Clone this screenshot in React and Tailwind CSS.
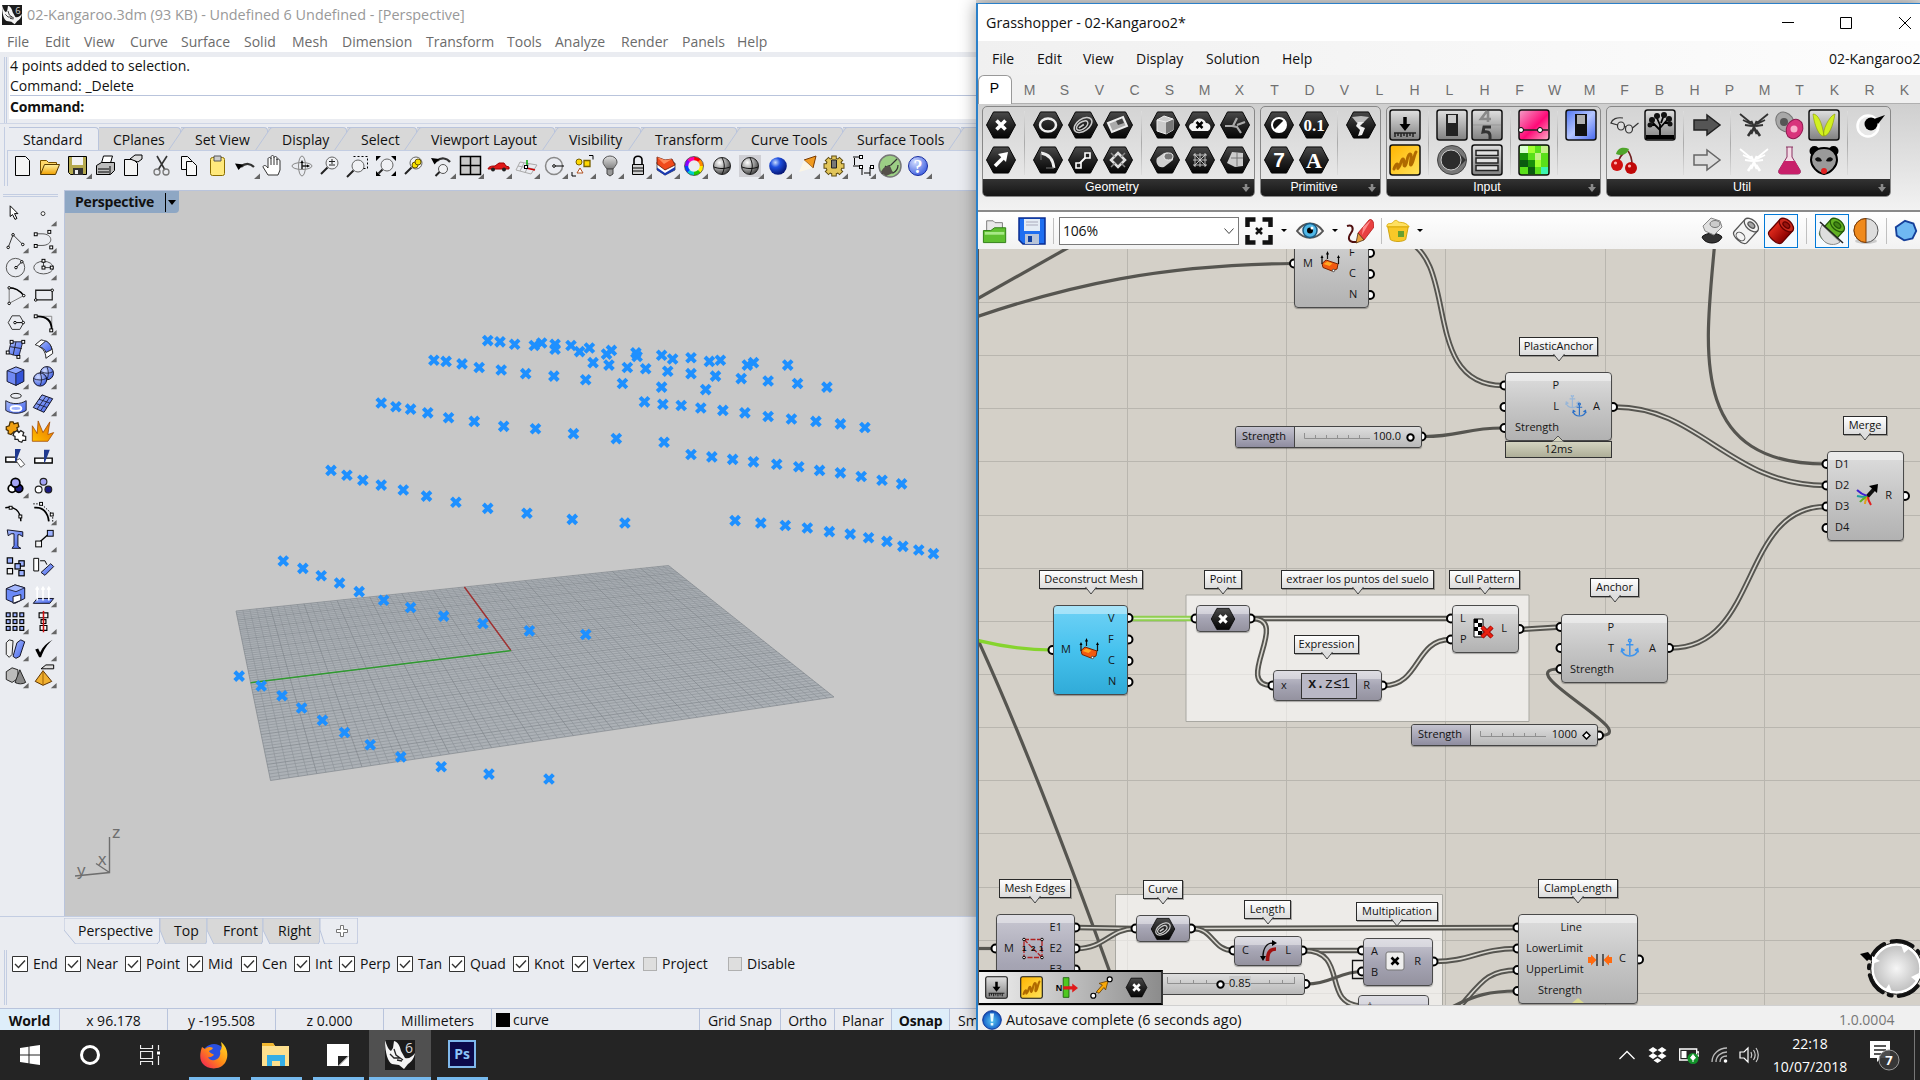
import React from "react";

/* ---------- shared gradients ---------- */
function Defs() {
  return (
    <svg className="absolute h-0 w-0" aria-hidden="true">
      <defs>
        <linearGradient id="hex" x1="0" y1="0" x2="0" y2="1">
          <stop offset="0" stopColor="#4a4a4a" />
          <stop offset=".5" stopColor="#232323" />
          <stop offset="1" stopColor="#050505" />
        </linearGradient>
        <linearGradient id="metal" x1="0" y1="0" x2="0" y2="1">
          <stop offset="0" stopColor="#e0e0e0" />
          <stop offset="1" stopColor="#808080" />
        </linearGradient>
        <linearGradient id="blueBtn" x1="0" y1="0" x2="1" y2="1">
          <stop offset="0" stopColor="#4f74f0" />
          <stop offset=".5" stopColor="#b5c6ff" />
          <stop offset="1" stopColor="#4466ee" />
        </linearGradient>
        <linearGradient id="pink" x1="0" y1="0" x2="1" y2="1">
          <stop offset="0" stopColor="#f3a0c8" />
          <stop offset=".55" stopColor="#ff0a78" />
          <stop offset="1" stopColor="#ffb0c8" />
        </linearGradient>
        <linearGradient id="yel" x1="0" y1="0" x2="1" y2="1">
          <stop offset="0" stopColor="#ffb400" />
          <stop offset="1" stopColor="#ffe35a" />
        </linearGradient>
        <linearGradient id="fold" x1="0" y1="0" x2="0" y2="1">
          <stop offset="0" stopColor="#fff0a0" />
          <stop offset="1" stopColor="#f0a000" />
        </linearGradient>
        <linearGradient id="face" x1="0" y1="0" x2="1" y2="1">
          <stop offset="0" stopColor="#a9bdff" />
          <stop offset="1" stopColor="#3f5fe8" />
        </linearGradient>
        <linearGradient id="burst" x1="0" y1="1" x2="1" y2="0">
          <stop offset="0" stopColor="#ffc000" />
          <stop offset="1" stopColor="#e66a00" />
        </linearGradient>
        <radialGradient id="ballGray" cx=".35" cy=".3" r=".8">
          <stop offset="0" stopColor="#ffffff" />
          <stop offset=".5" stopColor="#9a9a9a" />
          <stop offset="1" stopColor="#303030" />
        </radialGradient>
        <radialGradient id="ballBlue" cx=".35" cy=".3" r=".8">
          <stop offset="0" stopColor="#c8dcff" />
          <stop offset=".35" stopColor="#1f50e0" />
          <stop offset="1" stopColor="#000a60" />
        </radialGradient>
        <radialGradient id="ballInfo" cx=".5" cy=".55" r=".6">
          <stop offset="0" stopColor="#5ac8f0" />
          <stop offset=".7" stopColor="#1f6fd0" />
          <stop offset="1" stopColor="#0a2c90" />
        </radialGradient>
        <radialGradient id="ballSoft" cx=".35" cy=".3" r=".8">
          <stop offset="0" stopColor="#d0dbff" />
          <stop offset="1" stopColor="#3355dd" />
        </radialGradient>
        <radialGradient id="knob" cx=".5" cy=".5" r=".6">
          <stop offset="0" stopColor="#f6f6f6" />
          <stop offset="1" stopColor="#b4b4b4" />
        </radialGradient>
        <linearGradient id="redCyl" x1="0" y1="0" x2="1" y2="0">
          <stop offset="0" stopColor="#e02a1c" />
          <stop offset="1" stopColor="#8a0000" />
        </linearGradient>
        <linearGradient id="fox" x1="1" y1="0" x2="0" y2="1">
          <stop offset="0" stopColor="#ffe226" />
          <stop offset=".5" stopColor="#ff8a16" />
          <stop offset="1" stopColor="#f0135f" />
        </linearGradient>
      </defs>
    </svg>
  );
}

const Sq = ({ x, y, s = 3 }) => (
  <rect x={x - s / 2} y={y - s / 2} width={s} height={s} fill="#fff" stroke="#000" strokeWidth="1" />
);
const Dot = ({ x, y }) => <circle cx={x} cy={y} r="1.3" fill="#fff" stroke="#000" strokeWidth="1" />;

function Rhino({ className, six }) {
  return (
    <svg className={className} viewBox="0 0 30 30">
      <rect width="30" height="30" fill="#1b1b1b" />
      <path d="M0 0c2 6 3 9 6 11l2-3 1-7c4 1 6 5 7 10l4 7c4 1 7-1 10-5-1 6-4 9-7 11l-4 5-5-4-7-1C3 22 0 13 0 0z" fill="#f4f4f4" />
      <path d="M5 14l4 4 6 0M9 9l2 6 7 5M12 20l5 1" stroke="#222" fill="none" strokeWidth="1.3" />
      {six && (
        <text x="20" y="13" fontSize="14" fill="#d8d8d8" fontFamily="Open Sans">
          6
        </text>
      )}
    </svg>
  );
}

/* ---------- Rhino main toolbar ---------- */
const lens = (x = 16, y = 11) => (
  <>
    <circle cx={x} cy={y} r="6" fill="#f0f1f4" stroke="#666" />
    <path d={`M${x - 4.5} ${y + 4.5}L${x - 11} ${y + 11}`} stroke="#222" strokeWidth="2" />
  </>
);
const BAR = [
  [<path d="M7.500 4.500h10l4 4v15h-14z" fill="#f4f4f4" stroke="#000" />, 0],
  [<><path d="M4.500 22V8.500h6l2 2h8V14" fill="#ffd76a" stroke="#7a5200" /><path d="M4.500 22.500l4-10h15l-4 10z" fill="url(#fold)" stroke="#5a3c00" /></>, 0],
  [<><path d="M4.500 4.500h18v18h-16l-2-2z" fill="#b5a94e" stroke="#000" /><path d="M8 5h11v8H8z" fill="#f2f2f2" /><path d="M9 16h10v7H9z" fill="#333" /><path d="M11 18h3v4h-3z" fill="#eee" /></>, 1],
  [<><path d="M9.500 11l2-7h9l-2 7" fill="#fff" stroke="#000" /><path d="M4.500 13.500l5-3h13v8l-4 4h-14z" fill="#bdbdbd" stroke="#000" /><path d="M6 17h11M6 20h11M18 14v8" stroke="#000" /></>, 0],
  [<><path d="M4.500 7.500h9l4 4v12h-13z" fill="#f4f4f4" stroke="#000" /><path d="M10 7l5-4h7v4l-4 3z" fill="#ddd" stroke="#000" /></>, 0],
  [<><path d="M9 4l8 14M19 4L10 18" stroke="#333" strokeWidth="1.600" /><circle cx="9" cy="20" r="3" fill="none" stroke="#777" strokeWidth="1.300" /><circle cx="18" cy="20" r="3" fill="none" stroke="#777" strokeWidth="1.300" /></>, 0],
  [<><path d="M5.500 4.500h6l4 4v9h-10z" fill="#f7f7f7" stroke="#000" /><path d="M10.500 9.500h6l4 4v10h-10z" fill="#f7f7f7" stroke="#000" /></>, 0],
  [<><rect x="6.500" y="5.500" width="14" height="18" rx="2" fill="#ffe97c" stroke="#8a6d00" /><path d="M10 4h7v5h-7z" fill="#ccc" stroke="#555" /></>, 0],
  [<><path d="M9 15c5-5 10-3 13 0" stroke="#333" strokeWidth="2.200" fill="none" /><path d="M3 11.500l8.500 1-5 5.500z" fill="#000" /></>, 1],
  [<path d="M8 23l-5-8c0-2 3-2 4 0l1 1V7c0-2 3-2 3 0v-2c0-2 3-2 3 0v1c0-2 3-2 3 0v2c0-2 3-1 3 1v9l-2 5z M11 7v6M14 6v7M17 7v6" fill="#fff" stroke="#333" />, 0],
  [<><ellipse cx="14" cy="14" rx="10" ry="3.500" fill="none" stroke="#888" /><ellipse cx="14" cy="14" rx="3.500" ry="10" fill="none" stroke="#888" /><path d="M14 11v6M14 14h6" stroke="#222" strokeWidth="1.500" /><path d="M12.500 11l1.500-3 1.500 3zM19 12.500l3 1.500-3 1.500z" /></>, 0],
  [<>{lens()}<path d="M13 9.500h6M16 7v5M13 13h6" stroke="#222" /></>, 0],
  [<>{lens(14, 14)}<path d="M9.500 4.500h14v12h-5" stroke="#000" strokeDasharray="2 2" fill="none" /></>, 0],
  [<><circle cx="15" cy="13" r="6" fill="#f0f1f4" stroke="#666" /><path d="M10.500 17.500l-4 4" stroke="#222" strokeWidth="2" /><path d="M4 4h5l-5 5zM24 4v5l-5-5zM4 24v-5l5 5zM24 24h-5l5-5z" /></>, 0],
  [<>{lens()}<circle cx="15" cy="13" r="3" fill="#f8e000" stroke="#665500" /><circle cx="18" cy="10" r="3" fill="#f8e000" stroke="#665500" /></>, 0],
  [<><circle cx="15" cy="17" r="4.500" fill="#f0f1f4" stroke="#555" /><path d="M11.500 20l-4 4" stroke="#222" strokeWidth="2" /><path d="M9 9c4-4 10-3 13 1" stroke="#333" strokeWidth="2.200" fill="none" /><path d="M3 6l8.500 1-5 5.500z" /></>, 1],
  [<path d="M4.500 4.500h20v18h-20zM14.500 4.500v18M4.500 13.500h20" fill="#c8c8c8" stroke="#000" strokeWidth="1.500" />, 1],
  [<><path d="M4 17c1-3 4-3 7-3l4-3h5l2 3 3 1v2z" fill="#e01818" stroke="#a00000" /><circle cx="9" cy="17.500" r="2" fill="#222" /><circle cx="20" cy="17.500" r="2" fill="#222" /></>, 1],
  [<><path d="M8 10l17 3-6 9L4 18zM6 14l16 3M12 11l-4 8M17 12l-4 9" fill="none" stroke="#aaa" /><path d="M15 8v6" stroke="#0a0" strokeWidth="1.500" /><path d="M14 16l9 2" stroke="#c00" strokeWidth="1.500" /><Sq x={14} y={15} /></>, 1],
  [<><circle cx="14" cy="14" r="8.500" fill="none" stroke="#888" strokeWidth="1.500" /><path d="M14 14h10" stroke="#000" /><Dot x={14} y={14} /></>, 1],
  [<><circle cx="11" cy="10" r="3" fill="#ffd800" stroke="#776000" /><path d="M16 8.500h6v6h-6z" fill="#ffd800" stroke="#776000" strokeWidth="1.300" /><path d="M12 16l3 5h-6z" fill="#fff" stroke="#b05020" /><path d="M21 3.500h4v4M4 20v4h4" fill="none" stroke="#000" /></>, 1],
  [<><path d="M11 17c-3-4-4-5-4-7a7 6 0 0 1 14 0c0 2-1 3-4 7z" fill="url(#metal)" stroke="#555" /><path d="M11 17h6v5l-3 2-3-2z" fill="#999" stroke="#444" /></>, 1],
  [<><path d="M10 13V8c0-5 8-5 8 0v5" fill="none" stroke="#000" strokeWidth="1.600" /><path d="M8.500 12.500h11v10h-11zM9 16h10M9 19h10" fill="#d0d0d0" stroke="#000" /></>, 1],
  [<><path d="M5 10v8l8 5 10-5v-7z" fill="#fff" stroke="#333" strokeWidth=".800" /><path d="M13 21l10-6v3l-10 5.500-8-5.500v-2.500z" fill="#1a3ab0" /><path d="M5 5l8 3 7-1 3 6-10 5-8-6z" fill="#f04a1c" stroke="#601000" strokeWidth=".800" /><path d="M5 5l8 3 7-1-8 5z" fill="#ff8a5a" /></>, 1],
  [<g fill="none" strokeWidth="3.600">{["#f00", "#ff8a00", "#fe0", "#2c0", "#0cc", "#04f", "#80f", "#f0a"].map((c, i) => <path key={c} d="M14 6.500a7.500 7.500 0 0 1 5.600 2.300" stroke={c} transform={`rotate(${i * 45} 14 14)`} />)}<circle cx="14" cy="14" r="9.500" stroke="#333" strokeWidth=".700" /></g>, 1],
  [<><circle cx="14" cy="14" r="8.500" fill="url(#ballGray)" stroke="#222" /><path d="M6 15c5 2 11 2 16 0M14 6c3 5 3 11 0 16" fill="none" stroke="#111" /></>, 0],
  [<><path d="M3 3h22v22H3z" fill="#cfcfd4" /><circle cx="14" cy="14" r="8.500" fill="url(#ballGray)" stroke="#222" /><path d="M6 15c5 2 11 2 16 0M14 6c3 5 3 11 0 16" fill="none" stroke="#111" /></>, 1],
  [<circle cx="14" cy="14" r="8.800" fill="url(#ballBlue)" />, 1],
  [<><path d="M12 8l12-4-3 12z" fill="#f09a20" stroke="#7a3a00" /><path d="M12 8l9 8-14 4z" fill="#fdf6e4" opacity=".9" /></>, 1],
  [<><g stroke="#5c4a10" strokeWidth="5.500">{[0, 45, 90, 135].map((a) => <path key={a} d="M14 3.500v21" transform={`rotate(${a} 14 14)`} />)}</g><circle cx="14" cy="14" r="8.600" fill="#5c4a10" /><g stroke="#e2c55a" strokeWidth="3.600">{[0, 45, 90, 135].map((a) => <path key={a} d="M14 4.500v19" transform={`rotate(${a} 14 14)`} />)}</g><circle cx="14" cy="14" r="7.600" fill="#e2c55a" /><path d="M11.500 8h5v8h-5z" fill="#777" stroke="#222" /></>, 1],
  [<><path d="M5 5h7M5 14h7M6.500 6v7M14 5v1M14 14v9M22 15v9M16 21h6" stroke="#000" fill="none" /><Sq x={13} y={5} /><Sq x={13} y={15} /><Sq x={24} y={15} /></>, 1],
  [<><circle cx="14" cy="14" r="11" fill="#9ccf85" stroke="#777" strokeWidth="1.500" /><path d="M6 22c1-6 4-8 9-9l6-6M9 14l8 7c4-2 5-6 5-8" stroke="#333" fill="none" strokeWidth="1.200" /><path d="M5 20c3-6 6-6 9-6l3 7-7 3z" fill="#55504a" /></>, 0],
  [<><circle cx="14" cy="14" r="9.500" fill="url(#ballSoft)" stroke="#1a2ea0" /><text x="14" y="20.500" fontSize="18" textAnchor="middle" fill="#fff" fontFamily="Liberation Serif" fontWeight="bold">?</text></>, 1],
];

const Corner = () => <path d="M28 21.500v5.500h-6z" fill="#666" />;

/* ---------- Rhino side toolbar ---------- */
const tiles = (pts, w = 4, fills = []) =>
  pts.map(([x, y], i) => <rect key={i} x={x} y={y} width={w} height={w} fill={fills[i] || "#9db2ff"} stroke="#000" strokeWidth="1.200" />);
const SIDE = [
  [<path d="M9 6v11l2.500-2 2.500 5 2-1-2.500-5h3.500z" fill="#fff" stroke="#000" />, 0],
  [<circle cx="14" cy="14" r="2" fill="#fff" stroke="#333" />, 1],
  [<><path d="M7 21l5-13 10 10" fill="none" stroke="#333" /><Dot x={7} y={21} /><Dot x={12} y={8} /><Dot x={22} y={18} /></>, 1],
  [<><path d="M6 7h7c12 0 12 12 0 12H6" fill="none" stroke="#555" /><Sq x={6.500} y={7.500} /><Sq x={6.500} y={19.500} /><Sq x={20.500} y={5} /><Sq x={22.500} y={21} /></>, 1],
  [<><circle cx="14.500" cy="14" r="9.500" fill="none" stroke="#555" /><path d="M15 14l6-6" stroke="#000" /><Dot x={15} y={14} /><Dot x={21} y={8} /></>, 1],
  [<><ellipse cx="14.500" cy="14" rx="10" ry="6.500" fill="none" stroke="#555" /><path d="M14.500 14h9M14.500 14V7.500" stroke="#444" /><Sq x={14.500} y={14} /><Sq x={14.500} y={7} /><Sq x={23} y={14} /></>, 1],
  [<><path d="M8 6v16l15-8C19 9 14 6 8 6z" fill="none" stroke="#777" /><path d="M8 6c6 0 11 3 15 8" fill="none" stroke="#000" strokeWidth="1.500" /><Dot x={8} y={6} /><Dot x={8} y={22} /><Dot x={23} y={14} /></>, 1],
  [<><path d="M6.500 8.500h17v10h-17z" fill="none" stroke="#222" strokeWidth="1.300" /><Dot x={6.500} y={18.500} /><Dot x={23.500} y={8.500} /></>, 1],
  [<><path d="M11 7h8l4 7-4 7h-8l-4-7z" fill="none" stroke="#333" /><path d="M14 14h9" stroke="#000" /><Dot x={14} y={14} /><Dot x={22.500} y={14} /></>, 1],
  [<><path d="M8 7.500h15v14" fill="none" stroke="#888" /><path d="M8 7.500c10 0 15 4 15 14" fill="none" stroke="#000" strokeWidth="1.800" /><Sq x={6.500} y={7.500} /><Sq x={22.500} y={22} /></>, 1],
  [<><path d="M10 6h12l-4 15-11-3z" fill="url(#face)" stroke="#223" /><path d="M9 11l12 2M15 6l-3 14" stroke="#223" fill="none" /><Sq x={10.500} y={6} /><Sq x={22.500} y={6} /><Sq x={6.500} y={17} /><Sq x={17.500} y={21.500} /></>, 1],
  [<><path d="M6 9l6-5c7 1 12 6 12 14l-7 5c0-7-4-12-11-14z" fill="#fff" stroke="#222" /><path d="M10 11l7-6c4 2 6 6 6 9l-6 3c-1-3-3-5-7-6z" fill="url(#face)" stroke="#222" /></>, 1],
  [<><path d="M6 8l9-4 8 3v12l-8 4-9-4z" fill="#8ea6ff" stroke="#112" /><path d="M6 8l9 3v12l-9-4z" fill="#7089f4" stroke="#112" strokeWidth=".700" /><path d="M15 11l8-4v12l-8 4z" fill="#3454d8" stroke="#112" strokeWidth=".700" /></>, 1],
  [<><circle cx="18" cy="10.500" r="6.800" fill="url(#ballSoft)" stroke="#112" /><circle cx="11" cy="17" r="6.800" fill="url(#ballSoft)" stroke="#112" /><path d="M4 16c4 2 10 2 13 0M11 10c2 4 2 10 0 13M12 9c4 2 9 2 12 0M18 4c2 4 2 9 0 13" stroke="#112" fill="none" strokeWidth=".800" /></>, 1],
  [<><ellipse cx="15" cy="6" rx="5.500" ry="2.500" fill="none" stroke="#222" /><path d="M4.500 11c6 4 15 4 21 0v10c-6 4-15 4-21 0z" fill="url(#face)" stroke="#223" /><ellipse cx="15" cy="19" rx="5.500" ry="2.500" fill="#9db2ff" stroke="#fff" strokeWidth="2" /></>, 1],
  [<><path d="M13 5l11 4-9 14-11-5z" fill="url(#face)" stroke="#112" /><path d="M10 9.500l11 4M7 14l11 4M17 6.500l-9 13M20.500 8l-9 13.500" stroke="#112" fill="none" strokeWidth=".800" /></>, 1],
  [<><path d="M5 9l3-1 1-4 3 0 1 2 4-1 1 4-2 1 1 4-3 1-1-1-3 3-3-1 0-3-2-1z" fill="#f0a010" stroke="#4a3000" strokeWidth="1.300" /><path d="M13 15l3-2 2 2 2-2 3 2-1 3 3 1 0 4-3 0-1 2-3-1-1-2-3 0 0-3-2-1z" fill="#fff" stroke="#222" strokeWidth="1.300" /></>, 0],
  [<path d="M3 24V8l5 8L9 3l5 12L21 4l-2 13 6-2-6 9z" fill="url(#burst)" stroke="#a04800" strokeWidth=".800" />, 0],
  [<><path d="M4.500 12.500h11v5h-11z" fill="#fff" stroke="#000" strokeWidth="1.400" /><path d="M15 16l4-2 5 6-4 3z" fill="#fff" stroke="#555" /><path d="M14 4h6l-5 13h-1z" fill="#203a90" /></>, 0],
  [<><path d="M5.500 13.500h18v5h-18z" fill="#fff" stroke="#000" strokeWidth="1.400" /><path d="M15 5h6l-5 13h-1z" fill="#203a90" /></>, 0],
  [<g stroke="#000" strokeWidth="1.800"><circle cx="11" cy="17" r="4" fill="#fff" /><circle cx="18" cy="17" r="4" fill="#1a1a80" /><circle cx="14.500" cy="11" r="4.500" fill="#a4a4f4" /></g>, 1],
  [<g stroke="#222" strokeWidth="1.200"><circle cx="14.500" cy="10" r="3.500" fill="#a4a4f4" /><circle cx="9.500" cy="18" r="3.500" fill="#fff" /><circle cx="19.500" cy="18" r="3.500" fill="#1a1a80" /></g>, 0],
  [<><path d="M4 9c9-2 16 3 16 14" stroke="#000" fill="none" strokeWidth="1.500" /><Sq x={9.500} y={9} /><Sq x={19.500} y={18} /></>, 0],
  [<><path d="M5 9c9-1 14 5 15 14" stroke="#000" fill="none" strokeWidth="1.800" /><path d="M4 5h8l12 11v9" stroke="#000" fill="none" strokeDasharray="1.500 1.500" /><Sq x={12} y={5} /><Sq x={23} y={16} /></>, 1],
  [<path d="M6 4l16 2v5l-3-2-2 0v12l3 2h-9l2-3V8h-3l-3 2z" fill="url(#face)" stroke="#112" />, 0],
  [<><path d="M10 17l9-8" stroke="#000" strokeWidth="1.300" /><rect x="6.500" y="15.500" width="6" height="6" fill="#f4f4f4" stroke="#000" /><rect x="18.500" y="4.500" width="6" height="6" fill="#9db2ff" stroke="#000" /></>, 1],
  [<>{tiles([[6, 5], [6, 16], [18, 8], [14, 11], [18, 18]], 5.500, ["#9db2ff", "#f4f4f4"])}</>, 0],
  [<><path d="M4.500 5.500h5v13h-5z" fill="#fff" stroke="#000" /><path d="M11 8h5l2 4" stroke="#000" fill="none" /><path d="M12 20l10-9 3 3-9 9z" fill="url(#face)" stroke="#112" /></>, 0],
  [<><path d="M5 8l9-4 10 3v11l-10 5-9-4z" fill="#6b8af8" stroke="#112" /><path d="M5 8l10 3 9-4-10-3z" fill="#a6b9ff" stroke="#112" strokeWidth=".800" /><path d="M12 23v-7l8-2v6z" fill="#fff" stroke="#112" /></>, 1],
  [<><path d="M8 18h17l-4 5H4z" fill="url(#face)" stroke="#112" /><path d="M8 20V7M14 20V7M20 20V7M6.500 9L8 6.500 9.500 9M12.500 9L14 6.500 15.500 9M18.500 9L20 6.500 21.500 9" stroke="#fff" strokeWidth="1.600" fill="none" /></>, 1],
  [<>{tiles([[5, 5], [12, 5], [19, 5], [5, 12], [12, 12], [19, 12], [5, 19], [12, 19], [19, 19]], 4)}</>, 1],
  [<><path d="M10 5h9v5h-9zM12 12h5v4h-5zM11 18h7v5h-7z" fill="#f4f4f4" stroke="#000" strokeWidth="1.200" /><path d="M14.500 3v22" stroke="#d01010" strokeWidth="1.600" /></>, 1],
  [<><path d="M5 8l3-3 4 1-1 14-3 3-3-3z" fill="#f0f0f0" stroke="#222" /><path d="M12 22l4-14 4-3 4 2-5 15-4 2z" fill="url(#face)" stroke="#112" /></>, 1],
  [<path d="M6 15l3-1 2 4C14 12 18 8 24 5 18 10 15 15 12 23h-2z" fill="#000" />, 1],
  [<><path d="M5 10l6-4 6 2v9l-6 4-6-3z" fill="#bbb" stroke="#222" /><path d="M19 8l6 13c-3 2-8 2-11 0z" fill="#888" stroke="#222" /></>, 1],
  [<><path d="M14 9l9 11-9 4-8-4z" fill="#f0b030" stroke="#5a3000" /><path d="M14 9v15" stroke="#a06000" /><path d="M12 7l5-4h8v4h-7z" fill="#ddd" stroke="#000" /></>, 1],
];

/* ---------- Rhino window ---------- */
const MENU = [
  ["File", "w-[38px]"], ["Edit", "w-[39px]"], ["View", "w-[46px]"], ["Curve", "w-[51px]"], ["Surface", "w-[63px]"],
  ["Solid", "w-[48px]"], ["Mesh", "w-[50px]"], ["Dimension", "w-[84px]"], ["Transform", "w-[81px]"], ["Tools", "w-[48px]"],
  ["Analyze", "w-[66px]"], ["Render", "w-[61px]"], ["Panels", "w-[55px]"], ["Help", "w-[50px]"],
];
const TABS = [
  ["CPlanes", "w-[82px]"], ["Set View", "w-[87px]"], ["Display", "w-[79px]"], ["Select", "w-[70px]"], ["Viewport Layout", "w-[138px]"],
  ["Visibility", "w-[86px]"], ["Transform", "w-[96px]"], ["Curve Tools", "w-[106px]"], ["Surface Tools", "w-[118px]"], ["", "w-[60px]"],
];
const SNAPS = [
  ["End", "w-[53px]"], ["Near", "w-[60px]"], ["Point", "w-[62px]"], ["Mid", "w-[54px]"], ["Cen", "w-[53px]"], ["Int", "w-[45px]"],
  ["Perp", "w-[58px]"], ["Tan", "w-[52px]"], ["Quad", "w-[64px]"], ["Knot", "w-[59px]"], ["Vertex", "w-[71px]"],
];

const POINTS = [
  398, 278, 408, 279, 420, 281, 436, 282, 453, 285, 473, 287, 495, 289, 520, 291, 549, 293, 579, 295, 610, 298,
  442, 280, 453, 281, 466, 282, 481, 284, 499, 286, 519, 288, 540, 290, 564, 292, 588, 294, 615, 296, 643, 298,
  354, 294, 364, 295, 377, 297, 391, 300, 409, 302, 429, 305, 452, 307, 478, 310, 508, 313, 540, 316, 576, 318,
  484, 296, 497, 298, 512, 300, 527, 301, 545, 303, 564, 305, 584, 307, 605, 309, 627, 311, 651, 313, 675, 316,
  311, 329, 323, 332, 335, 334, 349, 337, 366, 341, 387, 344, 411, 348, 437, 350, 468, 354, 503, 358, 542, 361,
  526, 328, 541, 330, 556, 331, 572, 333, 590, 335, 608, 337, 627, 340, 646, 342, 666, 344, 686, 346, 706, 349,
  270, 384, 283, 388, 296, 392, 311, 396, 329, 400, 348, 405, 372, 410, 398, 415, 430, 419, 467, 424, 510, 427,
  564, 371, 581, 373, 598, 375, 615, 377, 634, 379, 652, 381, 669, 384, 686, 386, 703, 389, 720, 392, 736, 395,
  231, 458, 247, 464, 262, 470, 277, 476, 293, 483, 313, 490, 335, 496, 362, 503, 394, 509, 432, 515, 478, 518,
  600, 425, 621, 427, 641, 429, 659, 431, 677, 434, 694, 436, 709, 439, 724, 442, 737, 446, 750, 449, 762, 452,
  195, 552, 213, 560, 230, 568, 246, 578, 263, 588, 281, 598, 302, 608, 327, 618, 360, 626, 399, 632, 448, 636,
];
const K = 1920 / 1568;

/* maps the unit square on the ground plane to the perspective view */
function project(u, v) {
  const [x0, y0, x1, y1, x2, y2, x3, y3] = [236, 611, 668.5, 565.5, 834, 697, 270.5, 780.5];
  const dx1 = x1 - x2, dx2 = x3 - x2, dx3 = x0 - x1 + x2 - x3;
  const dy1 = y1 - y2, dy2 = y3 - y2, dy3 = y0 - y1 + y2 - y3;
  const det = dx1 * dy2 - dx2 * dy1;
  const g = (dx3 * dy2 - dx2 * dy3) / det, h = (dx1 * dy3 - dx3 * dy1) / det;
  const w = g * u + h * v + 1;
  return [((x1 - x0 + g * x1) * u + (x3 - x0 + h * x3) * v + x0) / w, ((y1 - y0 + g * y1) * u + (y3 - y0 + h * y3) * v + y0) / w];
}
const seg = (a, b) => `M${a[0].toFixed(1)} ${a[1].toFixed(1)}L${b[0].toFixed(1)} ${b[1].toFixed(1)}`;

function Viewport() {
  const N = 70;
  let minor = "", major = "";
  for (let i = 0; i <= N; i++) {
    const t = i / N;
    const s = seg(project(t, 0), project(t, 1)) + seg(project(0, t), project(1, t));
    if (i % 5 === 0) major += s;
    else minor += s;
  }
  const outline = [project(0, 0), project(1, 0), project(1, 1), project(0, 1)].map((p) => p.join(",")).join(" ");
  return (
    <div className="relative flex-1 overflow-hidden border-l border-t border-[#b9c4dc] bg-[#c8c8c8]">
      <svg className="absolute inset-0 h-full w-full" viewBox="65 191 911 725">
        <polygon points={outline} fill="#acb1b6" />
        <path d={minor} stroke="#8f959b" strokeWidth=".7" fill="none" />
        <path d={major} stroke="#81878d" strokeWidth=".7" fill="none" />
        <path d={seg(project(0.5, 0), project(0.5, 0.5))} stroke="#a03030" strokeWidth="1.4" />
        <path d={seg(project(0, 0.5), project(0.5, 0.5))} stroke="#2f9a2f" strokeWidth="1.4" />
        <g stroke="#1e90ff" strokeWidth="4">
          {POINTS.filter((_, i) => i % 2 === 0).map((x, i) => {
            const cx = x * K + 0.4, cy = POINTS[i * 2 + 1] * K + 0.2;
            return <path key={i} d={`M${cx - 4.4} ${cy - 4.4}l8.800 8.800m0-8.800l-8.800 8.800`} />;
          })}
        </g>
        <path d="M109.500 837v35.500L75 876M109.500 872.500L96 863.500" stroke="#6e6e6e" strokeWidth="1.400" fill="none" />
        <g fill="#6e6e6e" fontFamily="Liberation Sans" fontSize="17">
          <text x="112" y="838">z</text>
          <text x="98" y="865">x</text>
          <text x="77" y="876">y</text>
        </g>
      </svg>
      <div className="relative flex h-[22px] w-[114px] items-center rounded-br bg-[#8ea7c4] pl-[10px] text-[14px] font-bold tracking-[-0.2px]">
        <span className="w-[90px]">Perspective</span>
        <span className="h-[19px] w-px bg-black" />
        <span className="ml-[2px] border-x-[4.5px] border-t-[5px] border-x-transparent border-t-black" />
      </div>
    </div>
  );
}

function BottomTab({ label, className, active }) {
  const fill = active ? "#eaecf1" : "#d8d8d8";
  return (
    <div className={"relative flex h-[26px] items-center " + className}>
      <svg className="absolute inset-0 h-full w-full" preserveAspectRatio="none" viewBox="0 0 100 26">
        <path d="M0 0V12L12 26H97L99.500 23V0z" fill={fill} stroke="#b9c4dc" vectorEffect="non-scaling-stroke" />
      </svg>
      <span className="relative whitespace-nowrap">{label}</span>
    </div>
  );
}

function CheckBox({ label, className }) {
  return (
    <label className={"flex items-center gap-[5px] " + className}>
      <svg className="h-4 w-4 shrink-0" viewBox="0 0 16 16">
        <path d="M.5.500h15v15H.5z" fill="#fff" stroke="#333" />
        <path d="M3 8l3.500 3.500L13 4.500" fill="none" stroke="#333" strokeWidth="1.400" />
      </svg>
      {label}
    </label>
  );
}

function RhinoWindow() {
  return (
    <div className="flex h-full w-[976px] shrink-0 flex-col overflow-hidden bg-[#eaecf1]">
      <div className="flex h-[29px] items-center gap-[5px] bg-white pl-[2px] text-[#999]">
        <Rhino className="h-5 w-5" six />
        <span className="whitespace-nowrap text-[14.4px]">02-Kangaroo.3dm (93 KB) - Undefined 6 Undefined - [Perspective]</span>
      </div>
      <div className="flex h-[23px] items-center bg-white pl-[7px] pt-[2px] text-[#6b6b6b]">
        {MENU.map(([t, w]) => (
          <span key={t} className={"shrink-0 " + w}>{t}</span>
        ))}
      </div>
      <div className="flex h-[71px] pl-[4px] pt-[5px]">
        <div className="w-[3px] border-x border-[#c3cde2]" />
        <div className="ml-[2px] flex h-[62px] flex-1 flex-col bg-white pl-px leading-[18px]">
          <div className="h-[19px]">4 points added to selection.</div>
          <div className="h-[19px] leading-[20px]">Command: _Delete</div>
          <div className="flex-1 border-t border-[#b9c4dc] pt-[2px] font-bold tracking-[-0.2px]">Command:</div>
        </div>
      </div>
      <div className="flex h-[28px] items-end border-t border-[#cfd6e6] pl-[4px]">
        <div className="h-6 w-[3px] border-l border-[#c3cde2]" />
        <div className="flex h-6 flex-1 items-stretch overflow-hidden border-b border-[#c3cde2] pl-[2px]">
          <div className="-mb-px w-[90px] shrink-0 rounded-tr border-r border-t border-[#b9c4dc] bg-[#eaecf1] pl-[14px] leading-[23px]">Standard</div>
          {TABS.map(([t, w], i) => (
            <div key={i} className={"relative shrink-0 rounded-tr-[4px] border-r border-t border-[#b9c4dc] bg-[#d8d8d8] pl-[14px] leading-[23px] whitespace-nowrap " + w}>
              {i > 0 && (
                <svg className="absolute -left-[13px] -top-px h-6 w-[18px]" viewBox="0 0 18 24">
                  <path d="M0 24L15 2Q16 .500 18 .500V24z" fill="#d8d8d8" />
                  <path d="M0 24L15 2Q16 .500 18 .500" fill="none" stroke="#b9c4dc" />
                </svg>
              )}
              <span className="relative">{t}</span>
            </div>
          ))}
        </div>
      </div>
      <div className="flex h-[39px] items-start pl-[4px]">
        <div className="h-[35px] w-[4px] shrink-0 border-x border-[#c3cde2]" />
        <div className="flex pt-px">
          {BAR.map(([icon, more], i) => (
            <svg key={i} className="h-7 w-7" viewBox="0 0 28 28">
              {icon}
              {more ? <Corner /> : null}
            </svg>
          ))}
        </div>
      </div>
      <div className="flex min-h-0 flex-1">
        <div className="w-[64px] shrink-0 pt-[4px]">
          <div className="ml-[3px] h-[3px] w-[55px] border-y border-[#c3cde2]" />
          <div className="ml-px mt-[3px] grid w-[56px] grid-cols-2">
            {SIDE.map(([icon, more], i) => (
              <svg key={i} className="h-[27.2px] w-7" viewBox="0 0 28 28">
                {icon}
                {more ? <Corner /> : null}
              </svg>
            ))}
          </div>
        </div>
        <Viewport />
      </div>
      <div className="flex h-[34px] items-start border-t border-[#c3cde2] pl-[64px] pt-px">
        <BottomTab active label="Perspective" className="w-[96px] pl-[14px]" />
        <BottomTab label="Top" className="w-[47px] pl-[14px]" />
        <BottomTab label="Front" className="w-[56px] pl-[16px]" />
        <BottomTab label="Right" className="w-[57px] pl-[15px]" />
        <BottomTab active className="w-[38px] pl-[16px]" label={<svg className="h-3 w-3" viewBox="0 0 12 12"><path d="M4.500.500h3v4h4v3h-4v4h-3v-4h-4v-3h4z" fill="#fff" stroke="#777" /></svg>} />
      </div>
      <div className="flex h-[58px] items-start pl-[4px]">
        <div className="h-[55px] w-[3px] border-x border-[#c3cde2]" />
        <div className="flex h-[28px] items-center pl-[5px]">
          {SNAPS.map(([t, w]) => (
            <CheckBox key={t} label={t} className={"shrink-0 " + w} />
          ))}
          <label className="flex w-[85px] items-center gap-[5px]"><span className="h-[14px] w-[14px] border border-[#b0b0b0] bg-[#dedede]" />Project</label>
          <label className="flex items-center gap-[5px]"><span className="h-[14px] w-[14px] border border-[#b0b0b0] bg-[#dedede]" />Disable</label>
        </div>
      </div>
      <div className="flex h-[22px] shrink-0 border-t border-[#b9c4dc] text-center leading-[23px] [&>span]:shrink-0">
        <span className="w-[60px] border-r border-[#b9c4dc] bg-[#deeefa] font-bold">World</span>
        <span className="w-[108px] border-r border-[#b9c4dc]">x 96.178</span>
        <span className="w-[108px] border-r border-[#b9c4dc]">y -195.508</span>
        <span className="w-[108px] border-r border-[#b9c4dc]">z 0.000</span>
        <span className="w-[108px] border-r border-[#b9c4dc]">Millimeters</span>
        <span className="flex w-[208px] items-center gap-[3px] border-r border-[#b9c4dc] pl-1"><span className="h-[14px] w-[14px] bg-black" />curve</span>
        <span className="w-[81px] border-r border-[#b9c4dc]">Grid Snap</span>
        <span className="w-[54px] border-r border-[#b9c4dc]">Ortho</span>
        <span className="w-[57px] border-r border-[#b9c4dc]">Planar</span>
        <span className="w-[58px] border-r border-[#b9c4dc] bg-[#deeefa] font-bold tracking-[-0.2px]">Osnap</span>
        <span className="w-[27px] overflow-hidden pl-[8px] text-left">Sm</span>
      </div>
    </div>
  );
}

/* ---------- Grasshopper ribbon ---------- */
const HexBase = () => <path d="M8.500 1.500h15L30.500 16l-7 14.500h-15L1.500 16z" transform="translate(0 1.600) scale(1 .9)" fill="url(#hex)" stroke="#000" strokeWidth="1" />;
const Box = ({ fill = "url(#metal)" }) => <rect x="1" y="1" width="30" height="30" rx="2.500" fill={fill} stroke="#111" strokeWidth="1.500" />;
const Scribble = () => <path d="M5 25c2-6 4-6 4-3s-1 3 1 1 2-8 4-8 0 8 2 7 2-12 5-12-1 12 1 11 3-10 5-13" fill="none" stroke="#b06a00" strokeWidth="3" strokeLinecap="round" />;
const txt = (s, size, font) => (
  <text x="16" y={16 + size * 0.35} textAnchor="middle" fontSize={size} fill="#fff" fontFamily={font} fontWeight="bold">{s}</text>
);
const Spiral = () => <g fill="none" stroke="#ccc" strokeWidth="1.500" transform="rotate(-35 16 16)"><ellipse cx="16" cy="16" rx="10" ry="6" /><ellipse cx="15" cy="16" rx="6.500" ry="3.500" /><path d="M11 16h6" strokeWidth="1.800" /></g>;
const Cross = () => <path d="M11.500 11.500l9 9m0-9l-9 9" stroke="#fff" strokeWidth="3.600" />;
const Plug = () => <><Box /><path d="M16 8v10" stroke="#000" strokeWidth="3.500" /><path d="M10.500 15h11L16 22z" /><path d="M5 24h22M6 24v4M9 24v3M12 24v4M15 24v3M18 24v4M21 24v3M24 24v4" stroke="#222" strokeWidth="1.500" /></>;
const Insect = ({ c }) => <g stroke={c} fill="none" strokeWidth="1.800"><path d="M2 5l11 9M30 5L19 14M5 11l8 4M27 11l-8 4M7 16l7 1M25 16l-7 1" /><path d="M10 27l4-6M22 27l-4-6M13 12l6 13M19 12l-6 13" strokeWidth="2.600" /></g>;

const P = [
  { title: "Geometry", w: "w-[273px]", groups: [
    [[<><HexBase /><Cross /></>, <><HexBase /><path d="M10 22l8-8" stroke="#fff" strokeWidth="3.500" /><path d="M13 10l10-2-2 10z" fill="#fff" /></>]],
    [[<><HexBase /><ellipse cx="16" cy="16" rx="8" ry="6.500" fill="none" stroke="#eee" strokeWidth="2.500" /></>, <><HexBase /><path d="M9 9c7 1 12 6 13 15" stroke="#eee" strokeWidth="2.800" fill="none" /><path d="M9 9v7M22 24h-8" stroke="#777" /></>],
      [<><HexBase /><Spiral /></>, <><HexBase /><path d="M11 21L21 11" stroke="#fff" strokeWidth="1.800" /><path d="M9 19h5v5H9zM18 9h5v5h-5z" fill="#222" stroke="#fff" strokeWidth="1.600" /></>],
      [<><HexBase /><path d="M6 14l15-6 4 9-15 6z" fill="#aaa" stroke="#eee" strokeWidth="2" /><path d="M14 12l6-2.500 2 4.500-6 2z" fill="#444" /></>, <><HexBase /><path d="M16 9l7 7-7 7-7-7z" fill="#333" stroke="#ddd" strokeWidth="2.500" /><path d="M9 9l4 4M23 9l-4 4M9 23l4-4M23 23l-4-4" stroke="#888" strokeWidth="1.500" /></>]],
    [[<><HexBase /><path d="M8 11l7-4 9 3v11l-7 4-9-3z" fill="#ccc" stroke="#eee" /><path d="M17 13v12l7-4V10z" fill="#777" /><path d="M8 11l9 2 7-3" stroke="#eee" fill="none" /></>, <><HexBase /><path d="M8 14l7-5c5-2 10 2 9 7l-9 7c-6 2-9-5-7-9z" fill="#d0d0d0" /><ellipse cx="19.500" cy="12.500" rx="4.500" ry="3.500" fill="#777" stroke="#eee" /></>],
      [<><HexBase /><path d="M7 21c-4-3-1-7 2-7 2-6 11-6 13 0 5 0 6 6 2 8H8z" fill="#f4f4f4" /><path d="M12.500 13l6 6m0-6l-6 6" stroke="#000" strokeWidth="2.500" /></>, <><HexBase /><g stroke="#ccc" fill="none" strokeWidth=".900"><path d="M9 11h14M9 16h14M9 21h14M11 9v14M16 9v14M21 9v14M10 10l12 12M22 10L10 22" /></g></>],
      [<><HexBase /><path d="M6 17h8l4-8M13 17l5 1 4 6M18 16l8-3" stroke="#aaa" strokeWidth="2.200" fill="none" /></>, <><HexBase /><path d="M13 8l11 1v13l-8 1-8-4z" fill="#ccc" /><path d="M12 14h12M18 8v14" stroke="#777" /></>]],
  ] },
  { title: "Primitive", w: "w-[121px]", groups: [
    [[<><HexBase /><circle cx="16" cy="16" r="7" fill="#111" stroke="#fff" strokeWidth="2" /><path d="M21 11a7 7 0 0 1-10 10z" fill="#fff" /></>, <><HexBase />{txt("7", 21, "Liberation Sans")}</>],
      [<><HexBase />{txt("0.1", 17, "Liberation Serif")}</>, <><HexBase />{txt("A", 22, "Liberation Serif")}</>]],
    [[<><HexBase /><path d="M7 8l9-1 8 1-6 6h-6z" fill="#bbb" /><path d="M13 13h6l-4 4 5 2-3 7-4 1 2-6-4-4z" fill="#eee" /></>]],
  ] },
  { title: "Input", w: "w-[215px]", groups: [
    [[<Plug />, <><Box fill="url(#yel)" /><Scribble /></>]],
    [[<><Box /><path d="M10 5h12v22H10z" fill="#222" /><path d="M12 6h8v8h-8z" fill="#ccc" /></>, <><circle cx="16" cy="16" r="14.500" fill="#777" stroke="#444" /><path d="M22 8l8 8-8 8z" fill="#333" /><circle cx="15" cy="16" r="10" fill="#2c2c2c" stroke="#ccc" /></>],
      [<><Box /><path d="M16 2l-6 8h10M17 2v11" fill="none" stroke="#8a8a8a" strokeWidth="2.600" /><path d="M2 16h28" stroke="#999" /><path d="M20 18h-7l-1 5c4-1 7 0 7 4v3" fill="none" stroke="#333" strokeWidth="3" /></>, <><Box /><path d="M5 6.500h22v5H5zM5 14h22v5H5zM5 21.500h22v5H5z" fill="#e0e0e0" stroke="#222" strokeWidth="1.500" /></>]],
    [[<><Box fill="url(#pink)" /><path d="M2 21h28" stroke="#222" strokeWidth="1.500" /><circle cx="3" cy="21" r="2.500" fill="#fff" stroke="#000" /><circle cx="22" cy="21" r="2.500" fill="#fff" stroke="#000" /></>, <><Box fill="#5ae01a" /><path d="M2 2h8v7H2z" fill="#d9ffcf" /><path d="M10 2h7v7h-7zM17 16h6v7h-6z" fill="#a0ff30" /><path d="M2 9h8v7H2zM10 16h7v7h-7z" fill="#18900a" /><path d="M17 9h6v7h-6zM23 2h7v7h-7z" fill="#c5f08a" /><path d="M10 23h7v7h-7zM2 16h8v7H2z" fill="#0a5a10" /><path d="M23 23h7v7h-7z" fill="#3cf5b0" /></>]],
    [[<><Box fill="url(#blueBtn)" /><path d="M10 5h12v22H10z" fill="#111" /><path d="M12 6h8v9h-8z" fill="#b0b0b0" /></>]],
  ] },
  { title: "Util", w: "w-[285px]", groups: [
    [[<><ellipse cx="12" cy="17" rx="3.500" ry="4" fill="#ddd" stroke="#333" strokeWidth="1.200" /><ellipse cx="20" cy="20" rx="3.500" ry="4" fill="#ddd" stroke="#333" strokeWidth="1.200" /><path d="M8.500 16L2 14c1-4 6-6 12-5M23.500 19l6-5M15 17l2 1" stroke="#333" strokeWidth="1.200" fill="none" /></>, <><path d="M9 19c1-5 4-9 8-12M23 21c0-6-1-10-4-14" stroke="#702020" strokeWidth="1.600" fill="none" /><path d="M7 10c2-7 8-7 13-5-2 6-8 7-13 5z" fill="#4fa52a" /><circle cx="8" cy="21" r="6" fill="#d01010" /><circle cx="22" cy="24" r="6" fill="#c00808" /><circle cx="6.500" cy="19" r="1.600" fill="#ffb0b0" /><circle cx="20.500" cy="22" r="1.600" fill="#ffb0b0" /></>],
      [<><Box /><path d="M2 26h28v4H2z" /><path d="M16 27V15M16 21l-8-8M16 19l8-9M16 16l-4-9M17 14l3-8M11 16H5M21 14h6" stroke="#000" strokeWidth="1.800" /><g fill="#111"><circle cx="8" cy="11" r="3" /><circle cx="13" cy="7" r="3" /><circle cx="20" cy="6" r="3" /><circle cx="25" cy="10" r="3" /><circle cx="26" cy="15" r="2.500" /><circle cx="6" cy="16" r="2.500" /></g></>]],
    [[<path d="M3 11h13V6l13 10-13 10v-5H3z" fill="#555" stroke="#222" strokeWidth="1.500" />, <path d="M3 11h13V6l13 10-13 10v-5H3z" fill="#ddd" stroke="#666" strokeWidth="1.500" />]],
    [[<Insect c="#333" />, <Insect c="#fff" />],
      [<><ellipse cx="12" cy="13" rx="8.500" ry="10.500" fill="#a8a8a8" stroke="#777" transform="rotate(-35 12 13)" /><circle cx="11" cy="13" r="4" fill="#555" /><ellipse cx="21.500" cy="20" rx="8" ry="10" fill="#d8347c" stroke="#901850" transform="rotate(25 21.500 20)" /><circle cx="21" cy="20" r="3.500" fill="#f8b0cc" /></>, <><path d="M13 3h7M14 3v10L6 26c-1 3 0 4 3 4h15c3 0 4-1 3-4l-8-13V3" fill="#f4dce6" stroke="#8a3060" /><path d="M11 17h11l5 9c1 3 0 4-3 4H9c-3 0-4-1-3-4z" fill="#c8206a" /></>],
      [<><Box /><path d="M5 5c5 0 9 8 11 22-5 1-10-12-11-22zM27 5c-2 12-6 22-11 22-2-5 5-20 11-22z" fill="#d2f020" stroke="#8a9a00" strokeWidth=".600" /></>, <><circle cx="6.500" cy="7" r="5" /><circle cx="25.500" cy="7" r="5" /><path d="M16 4c9 0 13 6 13 12S23 29 16 30C9 29 3 22 3 16S7 4 16 4z" fill="#9a9a9a" stroke="#000" strokeWidth="2" /><path d="M7 15c2-3 6-2 7 2-3 1-6 1-7-2zM25 15c-2-3-6-2-7 2 3 1 6 1 7-2z" fill="#111" /><circle cx="16" cy="27" r="3" fill="#e02020" /></>]],
    [[<><circle cx="13" cy="17" r="10.500" fill="#e8e8e8" stroke="#fff" strokeWidth="2.500" /><circle cx="16" cy="15" r="6.500" fill="#000" /><path d="M19 10l11-4-7 9z" /></>]],
  ] },
];

const LETTERS = "MSVCSMXTDVLHLHFWMFBHPMTKRK".split("");

function Ribbon() {
  return (
    <div className="flex h-[106px] shrink-0 items-start gap-[5px] overflow-hidden bg-gradient-to-b from-[#cfcfcf] to-[#f2f2f2] pl-[4px] pt-[2px]">
      {P.map((p) => (
        <div key={p.title} className={"flex h-[91px] shrink-0 flex-col overflow-hidden rounded-[5px] border border-[#888] bg-gradient-to-b from-[#d4d4d4] to-[#ececec] " + p.w}>
          <div className="flex flex-1">
            {p.groups.map((g, gi) => (
              <React.Fragment key={gi}>
                {gi > 0 && <div className="mx-[5.500px] mt-1 h-[64px] w-px bg-gradient-to-b from-[#ddd] via-[#aaa] to-[#ddd]" />}
                {g.map((col, ci) => (
                  <div key={ci} className="flex w-[35px] flex-col items-center">
                    {col.map((icon, k) => (
                      <svg key={k} className="my-[1.500px] h-8 w-8" viewBox="0 0 32 32">{icon}</svg>
                    ))}
                  </div>
                ))}
              </React.Fragment>
            ))}
          </div>
          <div className="flex h-[17px] items-center bg-gradient-to-b from-[#333] to-[#161616] font-['Liberation_Sans',sans-serif] text-[12.300px] text-white">
            <span className="flex-1 text-center leading-[15px]">{p.title}</span>
            <svg className="mr-[3px] h-[10px] w-[10px]" viewBox="0 0 10 10"><path d="M5 1v5" stroke="#8a8a8a" strokeWidth="2.500" /><path d="M1 4h8L5 9z" fill="#8a8a8a" /></svg>
          </div>
        </div>
      ))}
    </div>
  );
}

const Ic = ({ children, className = "w-7 h-7" }) => <svg className={"shrink-0 " + className} viewBox="0 0 28 28">{children}</svg>;
const Caret = ({ className }) => <span className={"border-x-[3px] border-t-[3.500px] border-x-transparent border-t-black " + className} />;
const cyl = (fill, line, top = fill) => (
  <g transform="rotate(42 14 14)" stroke={line} strokeWidth="1.300">
    <path d="M5.500 6v16c0 5.500 17 5.500 17 0V6z" fill={fill} />
    <ellipse cx="14" cy="6" rx="8.500" ry="5" fill={top} />
    <ellipse cx="14" cy="6" rx="4" ry="2.300" fill={line} fillOpacity=".5" />
  </g>
);

function CanvasBar() {
  return (
    <div className="flex h-[39px] shrink-0 items-center border-t-2 border-[#8a8a8a] bg-gradient-to-b from-white to-[#f2f2f2] pl-[4px]">
      <Ic className="h-7 w-[26px]"><path d="M5 14V3h7l2 2h8v10" fill="#e8e8e8" stroke="#777" /><path d="M1.500 13.500h8l4-3h12v16h-24z" fill="#5fc030" stroke="#2a7a10" /><path d="M3 15h21v3H3z" fill="#a8e888" /></Ic>
      <Ic className="ml-[10px] h-7 w-7"><path d="M1 1h26v26H5l-4-4z" fill="#1e6ef0" stroke="#0a2c90" strokeWidth="1.500" /><path d="M6 2h16v12H6z" fill="#e4ecf4" /><path d="M8 5h12M8 8h12" stroke="#aab" /><path d="M7 17h14v10H7z" fill="#b8c4d8" /><path d="M10 19h4v6h-4z" fill="#1040a0" /></Ic>
      <span className="mx-[7px] h-[26px] w-px bg-[#c0c0c0]" />
      <div className="-ml-[2px] flex h-[28px] w-[180px] items-center border border-[#7a7a7a] bg-white pl-[3px] pr-1">
        <span className="flex-1 tracking-[-0.2px]">106%</span>
        <svg className="h-[10px] w-[10px]" viewBox="0 0 10 10"><path d="M.5 2.500L5 7.500l4.500-5" stroke="#444" fill="none" /></svg>
      </div>
      <Ic className="ml-[6px] h-7 w-7"><path d="M2.500 10V2.500h8M17.500 2.500h8V10M25.500 18v7.500h-8M10.500 25.500h-8V18" fill="none" stroke="#111" strokeWidth="4.500" /><path d="M11 11l6 6m0-6l-6 6" stroke="#111" strokeWidth="2.500" /></Ic>
      <Caret className="ml-[8px]" />
      <Ic className="ml-[9px] h-7 w-7"><path d="M1 14C8 4 20 4 27 14 20 23 8 23 1 14z" fill="#f0f0f0" stroke="#555" strokeWidth="2" /><circle cx="14" cy="13.500" r="7" fill="#50b8e8" stroke="#1c5a80" strokeWidth="1.500" /><circle cx="14" cy="13.500" r="3" /><circle cx="16" cy="11" r="1.500" fill="#fff" /></Ic>
      <Caret className="ml-[8px]" />
      <Ic className="ml-[8px] h-7 w-7"><path d="M1 9c6-2 7 3 4 7s-4 10 6 9" fill="none" stroke="#501010" strokeWidth="2" /><path d="M12 16L23 3c3-2 5 2 5 7L18 23z" fill="#e84040" stroke="#b01818" strokeWidth=".800" /><path d="M17 10l8-7-9 15z" fill="#ff8a8a" /><path d="M12 16l6 7-8 3z" fill="#e8a040" stroke="#503010" strokeWidth=".800" /></Ic>
      <span className="ml-[7px] h-[26px] w-px bg-[#c0c0c0]" />
      <Ic className="ml-[4px] h-[26px] w-[24px]"><path d="M2 9h24l-3 15c-4 3-14 3-18 0z" fill="#f8c828" stroke="#c89a00" /><path d="M1 9c0-6 5-2 7-5s5-3 6-1 8-1 13 6z" fill="#ffe060" stroke="#d8a800" /><path d="M14 14h7v7h-7z" fill="#68a030" /></Ic>
      <Caret className="ml-[7px]" />
      <div className="flex-1" />
      <Ic className="mr-[6px] h-7 w-7"><path d="M4 20c4-5 16-5 20 0-3 8-17 8-20 0z" fill="#333" stroke="#111" /><path d="M5 9l8-8 9 3 2 6-8 8-9-4z" fill="#e0e0e0" stroke="#888" /><ellipse cx="17" cy="7" rx="5" ry="3.500" fill="#ccc" stroke="#777" /></Ic>
      <Ic className="mr-[4px] h-7 w-7">{cyl("#f4f4f4", "#555")}<ellipse cx="8.500" cy="19.500" rx="5" ry="3.500" fill="none" stroke="#555" transform="rotate(42 8.500 19.500)" /></Ic>
      <span className="flex h-[34px] w-[34px] items-center justify-center border border-[#0078d7] bg-[#f4faff]"><Ic>{cyl("url(#redCyl)", "#600", "#c8281c")}</Ic></span>
      <span className="mx-[8px] h-[26px] w-px bg-[#c0c0c0]" />
      <span className="flex h-[34px] w-[34px] items-center justify-center border border-[#0078d7] bg-[#f4faff]"><Ic>{cyl("#62b022", "#245a08")}<path d="M4 8l18 17c-5 4-13 3-17-2S1 14 4 8z" fill="#dedede" stroke="#888" /><path d="M2 5l23 21" stroke="#222" strokeWidth="1.600" /></Ic></span>
      <Ic className="ml-[3px] h-7 w-7"><ellipse cx="14" cy="24" rx="11" ry="3" fill="#ccc" /><circle cx="14" cy="13.500" r="12" fill="#ddd" stroke="#555" /><path d="M14 1.500a12 12 0 0 0 0 24z" fill="#f08a1c" stroke="#803a00" /></Ic>
      <span className="mx-[6px] h-[26px] w-px bg-[#c0c0c0]" />
      <Ic className="mr-px h-[26px] w-[26px]"><path d="M13 3l9 3 3 8-4 8-9 2-8-5-1-9z" fill="#6fb8f2" stroke="#16409a" strokeWidth="2" /></Ic>
    </div>
  );
}

/* ---------- canvas ---------- */
const DARK = "#565550";
const Wire = ({ d, dbl, c = DARK, mid = "#d9d7d0" }) => (
  <>
    <path d={d} stroke={c} strokeWidth={dbl ? 5.4 : 3.2} fill="none" />
    {dbl && <path d={d} stroke={mid} strokeWidth="1.600" fill="none" />}
  </>
);
const PORTS = [
  1294, 263.5, 1370, 253, 1370, 274, 1370, 295, 1504.5, 385.500, 1504.5, 407, 1504.5, 428, 1613, 407, 1421.5, 436.5,
  1826.5, 464, 1826.5, 485.500, 1826.5, 506.500, 1826.5, 528, 1905, 496,
  1052.5, 650, 1128.5, 618, 1128.5, 639.500, 1128.5, 661, 1128.5, 682, 1195.5, 618.500, 1250.5, 618.500,
  1272.5, 685.500, 1382.5, 685.500, 1451, 618.500, 1451, 639.500, 1519.5, 629, 1560.5, 627, 1560.5, 648, 1560.5, 669, 1669, 648, 1599, 735.500,
  995.5, 948.500, 1075.5, 927.500, 1075.5, 948.500, 1075.5, 969.500, 1135.5, 928.500, 1191, 928.500, 1233.5, 950.500, 1302.5, 950.500,
  1362, 950.500, 1362, 971.500, 1433.5, 961.500, 1305.5, 984, 1517.5, 927.500, 1517.5, 948.500, 1517.5, 970, 1517.5, 991, 1639, 959.500,
];

const GRAY = "from-[#dedede] via-[#c6c6c6] to-[#b2b2b2]";
const LILAC = "from-[#c9c8d2] via-[#a6a5b4] to-[#94929f]";
const BLUE = "from-[#6fd2f6] via-[#46c2ee] to-[#30abd8]";

function Node({ className, tone = GRAY, children }) {
  return (
    <div className={"absolute flex rounded-[4px] border-[1.500px] border-[#4a4a4a] bg-gradient-to-b text-[11px] text-[#161616] shadow-[0_1px_1px_rgba(0,0,0,0.3)] " + tone + " " + className}>
      <div className="absolute inset-x-0 top-0 h-[8px] rounded-t-[3px] bg-white/40" />
      {children}
    </div>
  );
}
const Col = ({ items, className = "" }) => (
  <div className={"relative -mt-[2px] flex flex-col leading-[21px] " + (className.includes("justify") ? "" : "justify-center ") + className}>
    {items.map((t) => <span key={t} className="h-[21.200px] shrink-0">{t}</span>)}
  </div>
);
const Tag = ({ children, className }) => (
  <div className={"absolute h-[19px] border-[1.500px] border-[#2a2a2a] bg-gradient-to-b from-white to-[#dcdcdc] text-center text-[11px] leading-[16px] whitespace-nowrap shadow-[1px_1px_0_rgba(60,60,60,0.4)] " + className}>
    {children}
    <svg className="absolute left-1/2 top-[15.500px] h-[8px] w-[13px] -translate-x-1/2" viewBox="0 0 13 8"><path d="M1 0l5.500 7L12 0" fill="#dedede" stroke="#444" /></svg>
  </div>
);
function Slider({ className, name, value, diamond, nameClass }) {
  return (
    <div className={"absolute flex h-[22px] items-center overflow-hidden rounded-[3px] border-[1.500px] border-[#444] bg-gradient-to-b from-[#dedede] to-[#b8b8b8] text-[11px] shadow-[0_1px_1px_rgba(0,0,0,0.3)] " + className}>
      <span className={"flex h-full shrink-0 items-center border-r-[1.500px] border-[#444] bg-gradient-to-b from-[#c4c3cf] to-[#8f8da0] pb-[2px] " + nameClass}>{name}</span>
      <svg className="ml-[9px] h-[8px] w-[66px] shrink-0" viewBox="0 0 66 8"><path d="M.5 0v5.500H66M11.500 2v4M22.500 2v4M33.500 2v4M44.500 2v4M55.500 2v4" stroke="#909090" fill="none" /></svg>
      <span className="flex-1 pb-[2px] pr-[5px] text-right">{value}</span>
      <svg className="mr-[6px] h-[9px] w-[9px] shrink-0" viewBox="0 0 9 9">{diamond ? <path d="M4.500 1L8 4.500 4.500 8 1 4.500z" fill="#fff" stroke="#000" strokeWidth="1.500" /> : <circle cx="4.500" cy="4.500" r="3.200" fill="#fff" stroke="#000" strokeWidth="2" />}</svg>
    </div>
  );
}
const Icon = ({ className, children }) => <svg className={"absolute h-6 w-6 " + className} viewBox="0 0 24 24">{children}</svg>;
const MeshGlyph = () => (
  <>
    <path d="M4 13.500l4-3.500 6 2 6 2-1 5-5 2-9-3.500z" fill="#f25a10" stroke="#7a2400" />
    <path d="M5.500 14l4-2.500 5 2-3 2.500z" fill="#ffa820" />
    <path d="M4 14V7M9.500 9V3M20.500 14V7" stroke="#111" strokeWidth="1.200" />
    <path d="M2.500 8L4 5l1.500 3zM8 4.500L9.500 1 11 4.500zM19 8l1.500-3L22 8z" />
    <circle cx="15.500" cy="20.500" r="1.200" fill="#fff" stroke="#333" strokeWidth=".800" />
  </>
);
const AnchorGlyph = ({ c }) => <g stroke={c} fill="none" strokeWidth="1.700"><circle cx="12" cy="4" r="1.500" /><path d="M12 5v15M8 8.500h8M3 14c1 5 5 7 9 7s8-2 9-7M2.500 17l.8-4 3 2M21.500 17l-.8-4-3 2" /></g>;

function Canvas() {
  return (
    <div className="relative flex-1 overflow-hidden border-l border-[#555] bg-[#d4d0c8]">
      <div className="absolute -left-[979px] -top-[249px] h-[1080px] w-[1920px]">
        <svg className="absolute inset-0 h-full w-full" viewBox="0 0 1920 1080">
          <path d="M1127.500 240v780M1286.500 240v780M1445.500 240v780M1605.500 240v780M1764.500 240v780M970 302.500h950M970 355.500h950M970 408.500h950M970 461.500h950M970 515.500h950M970 568.500h950M970 621.500h950M970 674.500h950M970 727.500h950M970 780.500h950M970 833.500h950M970 887.500h950M970 940.500h950M970 993.500h950" stroke="#b9b6af" fill="none" />
          <path d="M1186 595h343v126.500h-343zM1115.500 894.500h327V1020h-327z" fill="#fff" fillOpacity=".58" stroke="#a9a8a2" />
          <Wire d="M970 303L1080 241" />
          <Wire d="M976 317C1070 285 1160 265 1292 263.500" />
          <Wire dbl d="M1405 240C1460 262 1420 385 1503 385.500" />
          <Wire d="M1424 436.500C1460 436.500 1465 428 1503 428" />
          <Wire d="M1715 240C1706 345 1685 464 1826 464" />
          <Wire dbl d="M1615 407C1700 407 1730 485.500 1826 485.500" />
          <Wire dbl d="M1671 648C1760 648 1740 506.500 1826 506.500" />
          <Wire d="M978 640Q1035 765 1112 978" />
          <Wire c="#86d42e" d="M976 640C1000 646 1030 650 1052 650" />
          <Wire dbl c="#8fcf4f" mid="#dcebc8" d="M1130 618.500H1193" />
          <Wire dbl d="M1252 618.500H1450" />
          <Wire dbl d="M1252 618.500C1292 618.500 1232 685.500 1272 685.500" />
          <Wire dbl d="M1384 685.500C1420 685.500 1415 639.500 1450 639.500" />
          <Wire dbl d="M1521 629.500L1560 627" />
          <Wire d="M1600 735.500C1646 735 1508 669 1559 669" />
          <Wire d="M976 948.500h20" />
          <Wire dbl d="M1077 927.500L1135 928.500" />
          <Wire dbl d="M1077 948.500C1105 948.500 1110 928.500 1135 928.500" />
          <Wire dbl d="M1193 928.500L1517 927.500" />
          <Wire dbl d="M1193 928.500C1213 928.500 1213 950.500 1233 950.500" />
          <Wire dbl d="M1304 950.500H1362" />
          <Wire dbl d="M1304 950.500C1350 951 1320 1005 1362 1006" />
          <Wire d="M1307 984C1330 984 1340 971.500 1362 971.500" />
          <Wire dbl d="M1435 961.500C1470 961.500 1480 948.500 1517 948.500" />
          <Wire dbl d="M1455 1012C1480 985 1485 970 1517 970" />
          <Wire d="M1450 1008C1475 995 1490 991 1517 991" />
          <path d="M1352.500 960.500h12v18h-12z" fill="none" stroke="#111" strokeWidth="1.300" />
          <g fill="#fff" stroke="#000" strokeWidth="2">
            {PORTS.filter((_, i) => i % 2 === 0).map((x, i) => <circle key={i} cx={x} cy={PORTS[i * 2 + 1]} r="4" />)}
          </g>
          <g>
            <circle cx="1896.500" cy="968.500" r="27.500" fill="none" stroke="#111" strokeWidth="4" strokeLinecap="round" strokeDasharray="22 7 3 7 20 8" transform="rotate(120 1896.500 968.500)" />
            <path d="M1860 954l8-2 4 5-5 4z" />
            <circle cx="1896.500" cy="968.500" r="24" fill="url(#knob)" stroke="#fff" strokeWidth="2.500" />
            <circle cx="1896.500" cy="968.500" r="25.800" fill="none" stroke="#222" />
            <path d="M1901 945l9 3-6 5zM1872 956l8 5-8 3zM1919 973l-8 4 6 5zM1885 990l4-6 3 8z" fill="#fff" />
          </g>
        </svg>

        <Node className="left-[1294px] top-[214px] h-[94px] w-[75px] justify-between px-[8px]">
          <span className="mt-[38px]">M</span>
          <Icon className="left-[23px] top-[35px]"><MeshGlyph /></Icon>
          <Col className="mr-[3px] w-[8px] pt-[4px]" items={["V", "F", "C", "N"]} />
        </Node>

        <Tag className="left-[1519px] top-[337px] w-[79px]">PlasticAnchor</Tag>
        <Node className="left-[1505px] top-[372px] h-[69px] w-[107px] justify-between px-[7px]">
          <Col className="w-[46px] text-right" items={["P", "L", "Strength"]} />
          <Icon className="left-[58px] top-[22px]"><g opacity=".5" transform="scale(.7) translate(0 -3)"><AnchorGlyph c="#6aa6e8" /></g><g transform="scale(.7) translate(10 9)"><AnchorGlyph c="#2a70c8" /></g></Icon>
          <Col className="mr-[4px]" items={["A"]} />
        </Node>
        <div className="absolute left-[1505px] top-[441px] h-[17px] w-[107px] border-[1.500px] border-[#333] bg-gradient-to-b from-[#d4d4c0] to-[#aeae98] text-center text-[11px] leading-[14px]">
          12ms
          <svg className="absolute -top-[6px] left-[46px] h-[6px] w-[12px]" viewBox="0 0 12 6"><path d="M0 6l6-6 6 6z" fill="#d4d4c0" stroke="#555" /></svg>
        </div>
        <Slider className="left-[1235px] top-[426px] w-[187px]" name="Strength" value="100.0" nameClass="w-[59px] pl-[6px]" />

        <Tag className="left-[1843px] top-[416px] w-[44px]">Merge</Tag>
        <Node className="left-[1827px] top-[451px] h-[90px] w-[77px] justify-between px-[7px]">
          <Col items={["D1", "D2", "D3", "D4"]} />
          <Icon className="left-[27px] top-[30px]"><path d="M12 15L20 6" stroke="#111" strokeWidth="4" /><path d="M14 4l9-2-1 9z" /><g fill="none" strokeWidth="2"><path d="M2 8c4 4 7 5 10 6" stroke="#4020d0" /><path d="M2 14c4 1 7 1 10 1" stroke="#20a0a0" /><path d="M5 20c2-3 4-4 7-5" stroke="#60b020" /><path d="M10 22c0-3 1-5 3-7" stroke="#e0a020" /><path d="M16 23c-2-3-3-5-3-8" stroke="#e02020" /></g></Icon>
          <Col className="mr-[4px]" items={["R"]} />
        </Node>

        <Tag className="left-[1039px] top-[570px] w-[104px]">Deconstruct Mesh</Tag>
        <Node tone={BLUE} className="left-[1053px] top-[605px] h-[90px] w-[75px] justify-between px-[7px]">
          <Col items={["M"]} />
          <Icon className="left-[23px] top-[31px]"><MeshGlyph /></Icon>
          <Col className="mr-[4px] w-[8px]" items={["V", "F", "C", "N"]} />
        </Node>

        <Tag className="left-[1204px] top-[570px] w-[38px]">Point</Tag>
        <Node tone={LILAC} className="left-[1196px] top-[605px] h-[27px] w-[54px] items-center justify-center">
          <svg className="relative h-[26px] w-[26px]" viewBox="0 0 32 32"><HexBase /><Cross /></svg>
        </Node>
        <Tag className="left-[1281px] top-[570px] w-[153px]">extraer los puntos del suelo</Tag>
        <Tag className="left-[1294px] top-[635px] w-[65px]">Expression</Tag>
        <Node tone={LILAC} className="left-[1273px] top-[670px] h-[31px] w-[109px] items-center justify-between pl-[7px] pr-[11px]">
          <span className="-mt-px">x</span>
          <span className="relative ml-[8px] h-[26px] w-[56px] border-[1.500px] border-[#333] bg-[#b9b8c6] text-center font-['Liberation_Mono',monospace] text-[14px] leading-[21px]"><b>x.</b>z≤1</span>
          <span className="-mt-px">R</span>
        </Node>

        <Tag className="left-[1449px] top-[570px] w-[71px]">Cull Pattern</Tag>
        <Node className="left-[1452px] top-[605px] h-[48px] w-[67px] justify-between px-[7px]">
          <Col items={["L", "P"]} />
          <Icon className="left-[18px] top-[11px]"><path d="M3 2h9v18H3z" fill="#fff" stroke="#000" /><path d="M3 2h4v4H3zM7 6h4v4H7zM3 10h4v4H3zM7 14h4v4H7z" /><path d="M11 10l10 10m0-10L11 20" stroke="#8a0000" strokeWidth="4.500" /><path d="M11 10l10 10m0-10L11 20" stroke="#e82010" strokeWidth="3" /></Icon>
          <Col className="mr-[4px]" items={["L"]} />
        </Node>

        <Tag className="left-[1590px] top-[578px] w-[49px]">Anchor</Tag>
        <Node className="left-[1561px] top-[614px] h-[69px] w-[107px] justify-between px-[7px]">
          <Col className="w-[45px] text-right" items={["P", "T", "Strength"]} />
          <Icon className="left-[57px] top-[22px]"><g transform="scale(.9)"><AnchorGlyph c="#3d94ee" /></g></Icon>
          <Col className="mr-[4px]" items={["A"]} />
        </Node>
        <Slider diamond className="left-[1411px] top-[724px] w-[187px]" name="Strength" value="1000" nameClass="w-[59px] pl-[6px]" />

        <Tag className="left-[999px] top-[879px] w-[72px]">Mesh Edges</Tag>
        <Node tone={LILAC} className="left-[996px] top-[914px] h-[100px] w-[79px] justify-between px-[7px]">
          <span className="mt-[23px]">M</span>
          <Icon className="left-[24px] top-[22px]"><path d="M3 2.500h18v18H3zM3 2.500l18 18" fill="none" stroke="#b02020" strokeWidth="1.300" strokeDasharray="5 1.500" /><g fontSize="8" fontWeight="bold" fontFamily="Liberation Sans"><text x="1" y="14">1</text><text x="10" y="14">2</text><text x="18" y="14">1</text></g><Dot x={3} y={2.500} /><Dot x={21} y={2.500} /><Dot x={3} y={20.500} /><Dot x={21} y={20.500} /></Icon>
          <Col className="mr-[5px] justify-start pt-[3px]" items={["E1", "E2", "E3"]} />
        </Node>
        <Tag className="left-[1143px] top-[880px] w-[40px]">Curve</Tag>
        <Node tone={LILAC} className="left-[1136px] top-[915px] h-[27px] w-[54px] items-center justify-center">
          <svg className="relative h-[26px] w-[26px]" viewBox="0 0 32 32"><HexBase /><Spiral /></svg>
        </Node>
        <Tag className="left-[1244px] top-[900px] w-[47px]">Length</Tag>
        <Node tone={LILAC} className="left-[1234px] top-[936px] h-[30px] w-[68px] justify-between px-[7px]">
          <Col items={["C"]} />
          <Icon className="left-[23px] top-[2px]"><path d="M9.500 22c0-8 2-12 8.500-12" fill="none" stroke="#a01010" strokeWidth="3.600" /><path d="M5 18C5 9 9 4 15 4" fill="none" stroke="#111" strokeWidth="1.500" /><path d="M14 1l5 3-5 3zM2 17h6l-3 5z" /></Icon>
          <Col className="mr-[3px]" items={["L"]} />
        </Node>
        <Tag className="left-[1356px] top-[902px] w-[82px]">Multiplication</Tag>
        <Node tone={LILAC} className="left-[1363px] top-[938px] h-[48px] w-[70px] justify-between px-[7px]">
          <Col items={["A", "B"]} />
          <Icon className="left-[19px] top-[10px]"><rect x="3" y="3" width="18" height="18" rx="2" fill="#eee" stroke="#777" /><path d="M8.500 8.500l7 7m0-7l-7 7" stroke="#000" strokeWidth="2.600" /></Icon>
          <Col className="mr-[4px]" items={["R"]} />
        </Node>
        <Node tone={LILAC} className="left-[1358px] top-[995px] h-[48px] w-[71px] pl-[8px]">
          <span className="mt-[5px] text-[9px] leading-[9px]">A</span>
        </Node>
        <div className="absolute left-[1120px] top-[973px] flex h-[22px] w-[185px] items-center rounded-[3px] border-[1.500px] border-[#444] bg-gradient-to-b from-[#dedede] to-[#b8b8b8] text-[11px]">
          <svg className="absolute left-[46px] top-[3px] h-[8px] w-[128px]" viewBox="0 0 128 8"><path d="M.5 0v6.500H128M13.500 3v4M26.500 3v4M39.500 3v4M102.500 3v4M115.500 3v4M127.500 0v7" stroke="#909090" fill="none" /></svg>
          <svg className="relative ml-[95px] mr-[4px] h-[9px] w-[9px]" viewBox="0 0 9 9"><circle cx="4.500" cy="4.500" r="3.200" fill="#fff" stroke="#000" strokeWidth="2" /></svg>
          <span className="relative -mt-[2px] bg-[#cacaca] leading-[14px]">0.85</span>
        </div>

        <Tag className="left-[1538px] top-[879px] w-[80px]">ClampLength</Tag>
        <Node className="left-[1518px] top-[914px] h-[90px] w-[120px] justify-between px-[7px]">
          <Col className="w-[56px] text-right" items={["Line", "LowerLimit", "UpperLimit", "Strength"]} />
          <Icon className="left-[69px] top-[33px]"><path d="M0 9h3V6.500l5.500 5.500L3 17.500V15H0zM24 9h-3V6.500L15.500 12l5.500 5.500V15h3z" fill="#ff6a10" /><path d="M9 6v12M15 6v12" stroke="#222" strokeWidth="1.300" /></Icon>
          <Col className="mr-[4px]" items={["C"]} />
          <span className="absolute bottom-0 left-[53px] border-x-[6px] border-b-[5px] border-x-transparent border-b-[#d8d890]" />
        </Node>

        <div className="absolute left-[979px] top-[970px] flex h-[35px] w-[184px] items-center gap-[12px] border-2 border-l-0 border-black border-r-[#333] bg-gradient-to-r from-[#f4f4f4] to-[#8c8c8c] pl-[6px] [&>svg]:h-[23px] [&>svg]:w-[23px]">
          <svg viewBox="0 0 32 32"><Plug /></svg>
          <svg viewBox="0 0 32 32"><Box fill="url(#yel)" /><Scribble /></svg>
          <svg viewBox="0 0 28 28"><text x="1" y="18" fontSize="11" fontFamily="Liberation Sans" fontWeight="bold">N</text><path d="M10 2h7v24h-7z" fill="#4fc820" stroke="#185a08" /><path d="M10 12.500h11V9l7 5.500-7 5.500v-3.500H10z" fill="#e01818" /></svg>
          <svg viewBox="0 0 28 28"><path d="M5 23L23 5" stroke="#222" /><path d="M8 19l7-8-4-2 11-3-3 11-2-3-6 7z" fill="#f8a808" stroke="#6a4000" /><circle cx="4" cy="24" r="3" fill="#fff" stroke="#000" strokeWidth="1.500" /><circle cx="24" cy="4" r="3" fill="#fff" stroke="#000" strokeWidth="1.500" /></svg>
          <svg viewBox="0 0 32 32"><HexBase /><Cross /></svg>
        </div>
      </div>
    </div>
  );
}

function GrasshopperWindow() {
  return (
    <div className="relative z-10 mt-[3px] flex min-w-0 flex-1 flex-col overflow-hidden border-l-2 border-t border-[#2b80c9] bg-[#f0f0f0] shadow-[0_0_16px_rgba(0,0,0,0.4)]">
      <div className="flex h-[37px] shrink-0 items-center bg-white pl-[8px]">
        <span className="flex-1 text-[14.3px]">Grasshopper - 02-Kangaroo2*</span>
        <svg className="h-3 w-[130px]" viewBox="0 0 130 12"><path d="M0 5.500h12M58.500.500h11v11h-11zM117 0l12 12M129 0l-12 12" stroke="#000" fill="none" /></svg>
        <span className="w-[8px]" />
      </div>
      <div className="flex h-[34px] shrink-0 items-center bg-gradient-to-r from-[#f0f0f0] to-[#fdfdfd] pl-[14px] pt-px">
        <span className="w-[45px]">File</span>
        <span className="w-[46px]">Edit</span>
        <span className="w-[53px]">View</span>
        <span className="w-[70px]">Display</span>
        <span className="w-[76px]">Solution</span>
        <span className="flex-1">Help</span>
        <span className="w-[91px] shrink-0 whitespace-nowrap">02-Kangaroo2</span>
      </div>
      <div className="flex h-[29px] shrink-0 items-stretch border-b border-[#b0b0b0] font-['Liberation_Sans',sans-serif] text-[14px] text-[#707070]">
        <span className="-mb-px w-[34px] shrink-0 rounded-t-[6px] border border-b-0 border-[#999] bg-white pr-px text-center leading-[25px] text-black">P</span>
        {LETTERS.map((l, i) => <span key={i} className="w-[35px] shrink-0 text-center leading-[30px]">{l}</span>)}
      </div>
      <Ribbon />
      <CanvasBar />
      <Canvas />
      <div className="flex h-[25px] shrink-0 items-center gap-[4px] border-t border-[#d0d0d0] bg-[#f0f0f0] pl-[4px] pt-[3px]">
        <svg className="h-5 w-5" viewBox="0 0 20 20"><circle cx="10" cy="10" r="9.300" fill="url(#ballInfo)" stroke="#123a9a" /><path d="M8 3.500h4l-1 8H9zM8.700 13h2.600v2.600H8.700z" fill="#e6faff" /></svg>
        <span className="flex-1 text-[14.400px]">Autosave complete (6 seconds ago)</span>
        <span className="w-[81px] text-[#777]">1.0.0004</span>
      </div>
    </div>
  );
}

/* ---------- taskbar ---------- */
const Task = ({ children, active }) => (
  <div className={"flex h-full w-[62px] flex-col items-center justify-between pt-[10px] " + (active ? "bg-[#505050]" : "")}>
    {children}
    <span className={"h-[3px] bg-[#76b9ed] " + (active ? "w-full" : "w-[51px]")} />
  </div>
);

function Taskbar() {
  return (
    <div className="flex h-[50px] shrink-0 items-center bg-[#242424] text-white">
      <div className="flex w-[60px] justify-center"><svg className="h-5 w-5" viewBox="0 0 20 20"><path d="M0 3l8.500-1.300V9.500H0zM9.500 1.500L20 0v9.500H9.500zM0 10.500h8.500v7.800L0 17zM9.500 10.500H20V20L9.500 18.500z" fill="#fff" /></svg></div>
      <div className="flex w-[60px] justify-center"><span className="h-5 w-5 rounded-full border-[3px] border-white" /></div>
      <div className="flex w-[60px] justify-center"><svg className="h-5 w-5" viewBox="0 0 20 20"><path d="M.5 0v3.500h12V0M.5 20v-3.500h12V20M.5 6.500h12v7H.500zM18.500 0v5M18.500 11v9" fill="none" stroke="#eee" strokeWidth="1.200" /><path d="M17 6.500h3v3h-3z" fill="#fff" /></svg></div>
      <div className="w-[3px]" />
      <Task><svg className="h-[30px] w-[30px]" viewBox="0 0 30 30"><circle cx="15" cy="16" r="12" fill="#2a50e0" /><path d="M3 7c-2 6-3 12 1 17s16 7 22-1c4-6 3-16-4-21 1 4 1 6-1 9 1 4-1 8-5 9-4 1-6-1-7-3 3 1 4-1 6-2-1-2-4-1-5-4 1-1 3-1 4-3-3-2-6-1-8 1z" fill="url(#fox)" /></svg></Task>
      <Task><svg className="h-[30px] w-[30px]" viewBox="0 0 30 30"><path d="M1 3h11l2 3h14v20H1z" fill="#fde08e" /><path d="M1 3h11l2 3H1z" fill="#f2b830" /><path d="M6 15h18v11h-5v-5h-8v5H6z" fill="#35aee6" /></svg></Task>
      <Task><svg className="h-[30px] w-[30px]" viewBox="0 0 30 30"><path d="M4 4h22v12l-10 10H4z" fill="#fff" /><path d="M26 16v10H16z" fill="#fff" /><path d="M15 26V16h10z" fill="#222" /></svg></Task>
      <Task active><Rhino six className="h-[30px] w-[30px]" /></Task>
      <Task><span className="flex h-[28px] w-[28px] items-center justify-center border-2 border-[#7fb8ec] bg-[#0c0a4a] text-[14px] font-bold text-[#8cc4f8]">Ps</span></Task>
      <div className="flex-1" />
      <div className="flex items-center">
        <svg className="h-[18px] w-[18px]" viewBox="0 0 18 18"><path d="M1.500 13L9 5.500l7.500 7.500" stroke="#fff" fill="none" strokeWidth="1.300" /></svg>
        <svg className="ml-[12px] h-[18px] w-[19px]" viewBox="0 0 19 18"><path d="M5 1l4.500 3L5 7 .500 4zM14 1l4.500 3L14 7 9.500 4zM5 7l4.500 3L5 13 .500 10zM14 7l4.500 3-4.500 3-4.500-3zM9.500 12l4 2.500-4 2.500-4-2.500z" fill="#fff" /></svg>
        <svg className="ml-[12px] h-[18px] w-[20px]" viewBox="0 0 20 18"><path d="M.700 3h17v11H.700zM18 6h2v4h-2" fill="none" stroke="#fff" strokeWidth="1.300" /><path d="M2.500 5h5v7h-5z" fill="#fff" /><circle cx="14" cy="12.500" r="5.500" fill="#12922a" /><path d="M14 8.500l2.500 3.500-2.500 2-2.500-2zM14 13v3" fill="#fff" stroke="#fff" /></svg>
        <svg className="ml-[12px] h-[18px] w-[18px]" viewBox="0 0 18 18"><g fill="none" stroke="#bbb" strokeWidth="1.300"><path d="M1 16C1 8 8 2 16 2M5 16c0-6 5-10 11-10M9 16c0-4 3-6 7-6" /></g><circle cx="14.500" cy="15" r="1.800" fill="#fff" /></svg>
        <svg className="ml-[10px] h-[18px] w-[21px]" viewBox="0 0 21 18"><path d="M1 6h4l4-4v14l-4-4H1z" fill="none" stroke="#fff" strokeWidth="1.200" /><path d="M12 6c1 2 1 4 0 6M14.500 4c2 3 2 7 0 10M17 2c3 4 3 10 0 14" fill="none" stroke="#ccc" strokeWidth="1.200" /></svg>
        <div className="ml-[12px] w-[76px] text-center text-[14px] leading-[23px] whitespace-nowrap">22:18<br />10/07/2018</div>
        <svg className="ml-[21px] h-[34px] w-[32px]" viewBox="0 0 32 34"><path d="M1 3h20v17H12l-4 4v-4H1z" fill="#fff" /><path d="M5 8h12M5 12h12M5 16h8" stroke="#222" strokeWidth="1.300" /><circle cx="20" cy="22" r="10" fill="#3a3a3a" fillOpacity=".9" stroke="#999" /><text x="20" y="27" textAnchor="middle" fill="#fff" fontSize="13" fontWeight="bold" fontFamily="Open Sans">7</text></svg>
        <span className="ml-[13px] mr-[5px] h-[50px] w-px bg-[#777]" />
      </div>
    </div>
  );
}

export default function App() {
  return (
    <div className="flex h-[1080px] w-[1920px] flex-col overflow-hidden bg-[#dcdcdc] font-['Open_Sans','Noto_Sans',sans-serif] text-[14px] leading-[20px] text-[#111]">
      <Defs />
      <div className="flex h-[1030px] shrink-0 overflow-hidden">
        <RhinoWindow />
        <GrasshopperWindow />
      </div>
      <Taskbar />
    </div>
  );
}
